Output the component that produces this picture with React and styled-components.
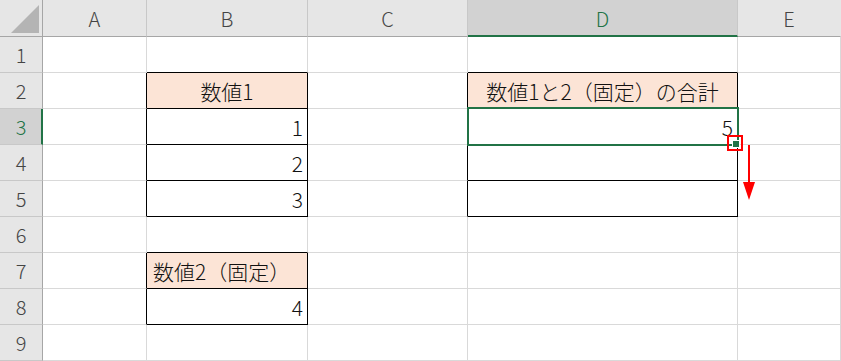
import React from "react";
import styled, { createGlobalStyle } from "styled-components";

const GlobalStyle = createGlobalStyle`
  html, body {
    margin: 0;
    padding: 0;
    background: #ffffff;
  }
  body {
    font-family: "Noto Sans CJK JP", "Noto Sans", sans-serif;
    font-weight: 300;
    overflow: hidden;
  }
`;

const GREEN = "#217346";
const GRID = "#d9d9d9";

const Sheet = styled.div`
  display: grid;
  grid-template-columns: 43px 104px 161px 160px 270px 1fr;
  grid-template-rows: 37px;
  grid-auto-rows: 36px;
  width: 841px;
`;

const Corner = styled.div`
  background: #e6e6e6;
  border-right: 1px solid #a6a6a6;
  border-bottom: 1px solid #a6a6a6;
  display: flex;
  align-items: flex-end;
  justify-content: flex-end;
  padding: 0 3px 3px 0;
`;

const ColHead = styled.div`
  background: ${(p) => (p.$active ? "#d2d2d2" : "#e6e6e6")};
  color: ${(p) => (p.$active ? GREEN : "#444444")};
  border-right: 1px solid ${(p) => (p.$last ? "#e6e6e6" : "#c8c8c8")};
  border-bottom: ${(p) => (p.$active ? `2px solid ${GREEN}` : "1px solid #a6a6a6")};
  display: flex;
  align-items: center;
  justify-content: center;
  font-size: 20px;
  padding-top: 1px;
`;

const RowHead = styled.div`
  background: ${(p) => (p.$active ? "#d2d2d2" : "#e6e6e6")};
  color: ${(p) => (p.$active ? GREEN : "#444444")};
  border-right: ${(p) => (p.$active ? `2px solid ${GREEN}` : "1px solid #a6a6a6")};
  border-bottom: 1px solid #c8c8c8;
  display: flex;
  align-items: center;
  justify-content: center;
  font-size: 20px;
  padding-left: ${(p) => (p.$active ? "1px" : "0")};
`;

const Cell = styled.div`
  position: ${(p) => (p.$selected ? "relative" : "static")};
  background: ${(p) => (p.$fill ? "#fce4d6" : "#ffffff")};
  border-right: 1px solid ${(p) => (p.$rightDark ? "#000000" : GRID)};
  border-bottom: 1px solid ${(p) => (p.$bottomDark ? "#000000" : GRID)};
  display: flex;
  align-items: center;
  justify-content: ${(p) =>
    p.$align === "right" ? "flex-end" : p.$align === "left" ? "flex-start" : "center"};
  padding: 0 ${(p) => (p.$align === "right" ? "4px" : "6px")} 0 6px;
  font-size: 21px;
  color: #111111;
  white-space: nowrap;
`;

const Selection = styled.div`
  position: absolute;
  left: -1px;
  top: -2px;
  right: -2px;
  bottom: -2px;
  border: 2px solid ${GREEN};
  pointer-events: none;
`;

const HandleMark = styled.div`
  position: absolute;
  left: 259px;
  top: 26px;
  width: 12px;
  height: 12px;
  border: 2px solid #ff0000;
`;

const FillHandle = styled.div`
  position: absolute;
  left: 264px;
  top: 31px;
  width: 6px;
  height: 6px;
  background: ${GREEN};
  border: 1px solid #ffffff;
`;

const Arrow = styled.svg`
  position: absolute;
  left: 274px;
  top: 36px;
  overflow: visible;
`;

const columns = ["A", "B", "C", "D", "E"];

const boxes = [
  { col: 1, from: 2, to: 5 },
  { col: 1, from: 7, to: 8 },
  { col: 3, from: 2, to: 5 },
];

const inBox = (c, r) => boxes.some((b) => b.col === c && r >= b.from && r <= b.to);

const data = {
  "1-2": { text: "数値1", fill: true, align: "center" },
  "1-3": { text: "1", align: "right" },
  "1-4": { text: "2", align: "right" },
  "1-5": { text: "3", align: "right" },
  "1-7": { text: "数値2（固定）", fill: true, align: "left" },
  "1-8": { text: "4", align: "right" },
  "3-2": { text: "数値1と2（固定）の合計", fill: true, align: "center" },
  "3-3": { text: "5", align: "right" },
};

const CornerMark = () => (
  <svg width="28" height="28" viewBox="0 0 28 28">
    <polygon points="28,0 28,28 0,28" fill="#b4b4b4" />
  </svg>
);

const App = () => {
  const rows = [1, 2, 3, 4, 5, 6, 7, 8, 9];
  return (
    <>
      <GlobalStyle />
      <Sheet>
        <Corner>
          <CornerMark />
        </Corner>
        {columns.map((c, i) => (
          <ColHead key={c} $active={c === "D"} $last={i === columns.length - 1}>
            {c}
          </ColHead>
        ))}
        {rows.map((r) => (
          <React.Fragment key={r}>
            <RowHead $active={r === 3}>{r}</RowHead>
            {columns.map((c, ci) => {
              const d = data[`${ci}-${r}`] || {};
              const selected = ci === 3 && r === 3;
              return (
                <Cell
                  key={c}
                  $fill={d.fill}
                  $align={d.align}
                  $selected={selected}
                  $rightDark={inBox(ci, r) || inBox(ci + 1, r)}
                  $bottomDark={inBox(ci, r) || inBox(ci, r + 1)}
                >
                  {d.text}
                  {selected && (
                    <>
                      <Selection />
                      <HandleMark />
                      <FillHandle />
                      <Arrow width="14" height="56" viewBox="0 0 14 56">
                        <rect x="6" y="0" width="2" height="40" fill="#ff0000" />
                        <polygon points="1,37 13,37 7,55" fill="#ff0000" />
                      </Arrow>
                    </>
                  )}
                </Cell>
              );
            })}
          </React.Fragment>
        ))}
      </Sheet>
    </>
  );
};

export default App;
